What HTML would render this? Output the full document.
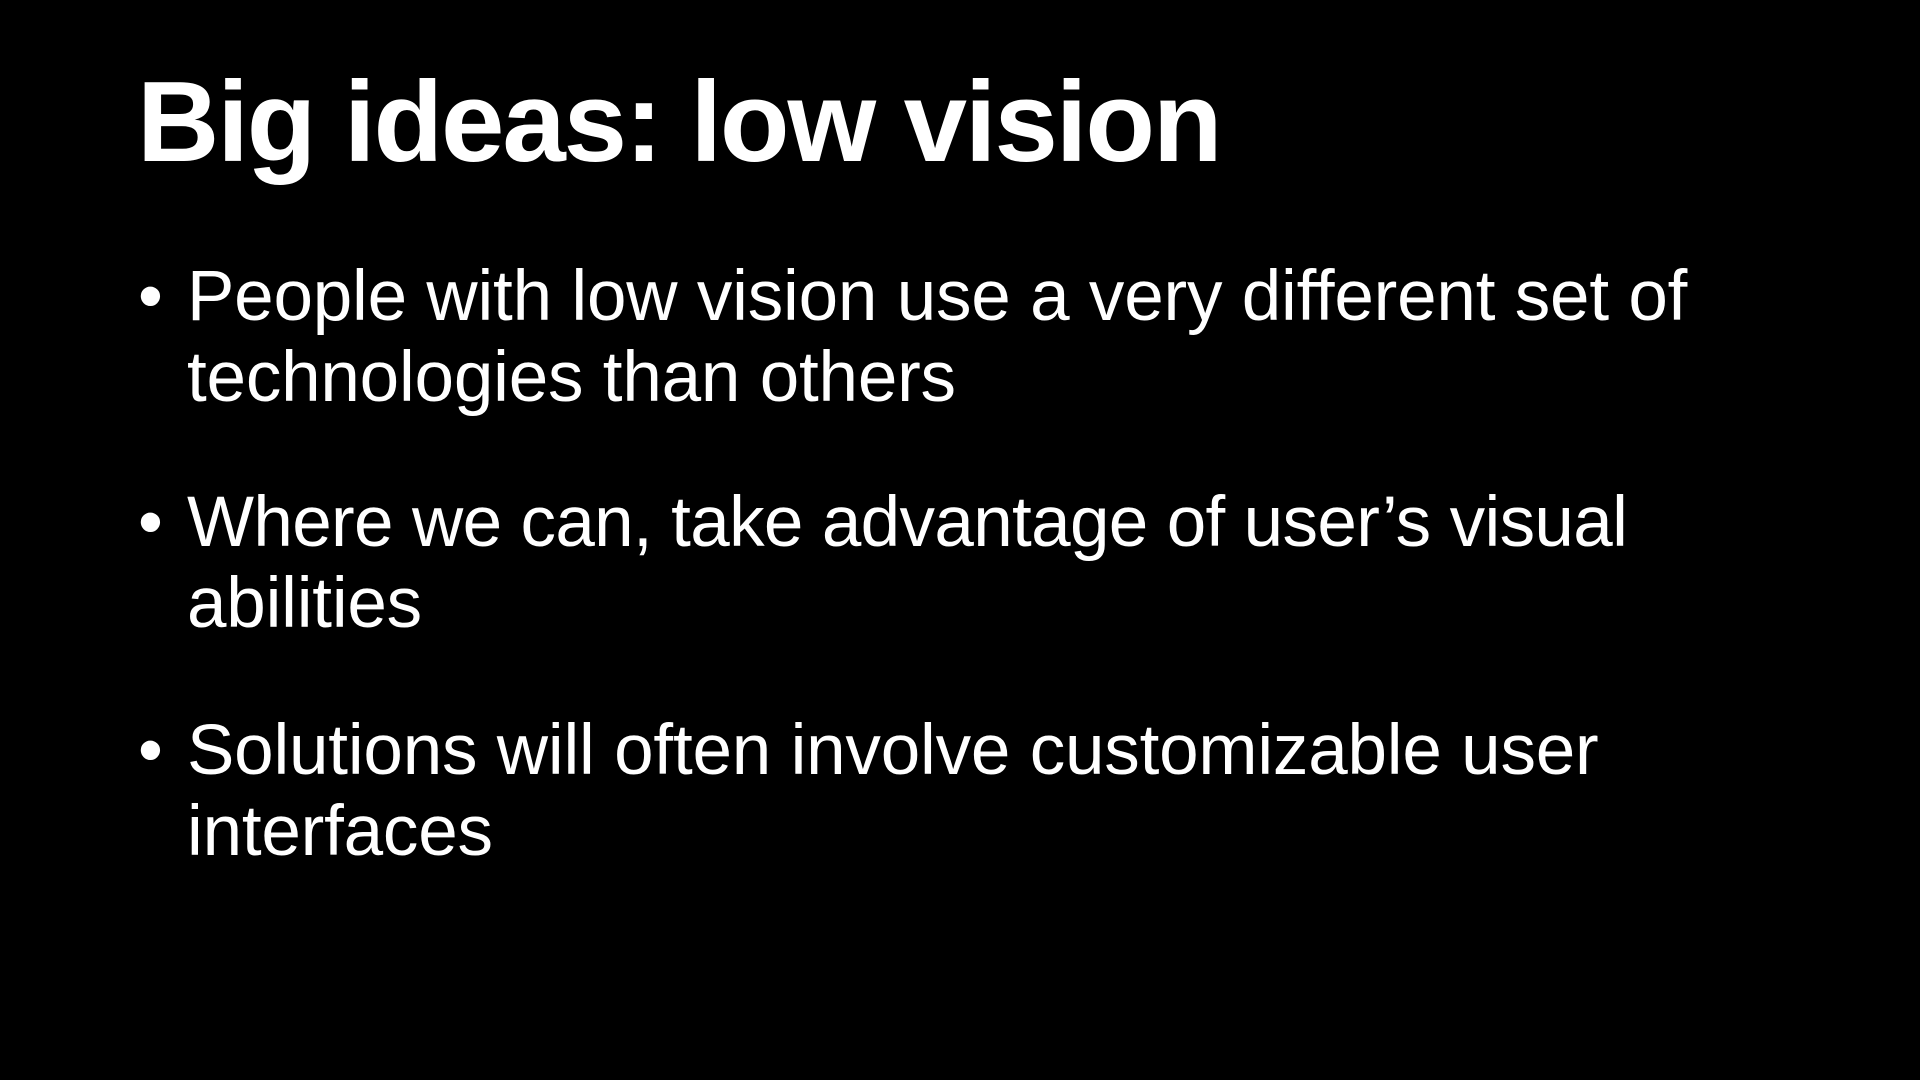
<!DOCTYPE html>
<html><head><meta charset="utf-8"><style>
html,body{margin:0;padding:0;background:#000;width:1920px;height:1080px;overflow:hidden}
body{font-family:"Liberation Sans",Arial,sans-serif;color:#fff;position:relative}
.t{position:absolute;left:137px;top:66px;font-size:114px;line-height:114px;font-weight:bold;white-space:nowrap;letter-spacing:-2.1px}
.l{position:absolute;left:187px;font-size:71px;line-height:81px;white-space:nowrap;letter-spacing:-0.2px}
.b{position:absolute;left:138px;font-size:71px;line-height:81px}
</style></head><body>
<div class="t">Big ideas: low vision</div>
<div class="b" style="top:256px">•</div>
<div class="l" style="top:256px">People with low vision use a very different set of</div>
<div class="l" style="top:337px">technologies than others</div>
<div class="b" style="top:482px">•</div>
<div class="l" style="top:482px;letter-spacing:-0.65px">Where we can, take advantage of user’s visual</div>
<div class="l" style="top:563px">abilities</div>
<div class="b" style="top:710px">•</div>
<div class="l" style="top:710px">Solutions will often involve customizable user</div>
<div class="l" style="top:791px">interfaces</div>
</body></html>
